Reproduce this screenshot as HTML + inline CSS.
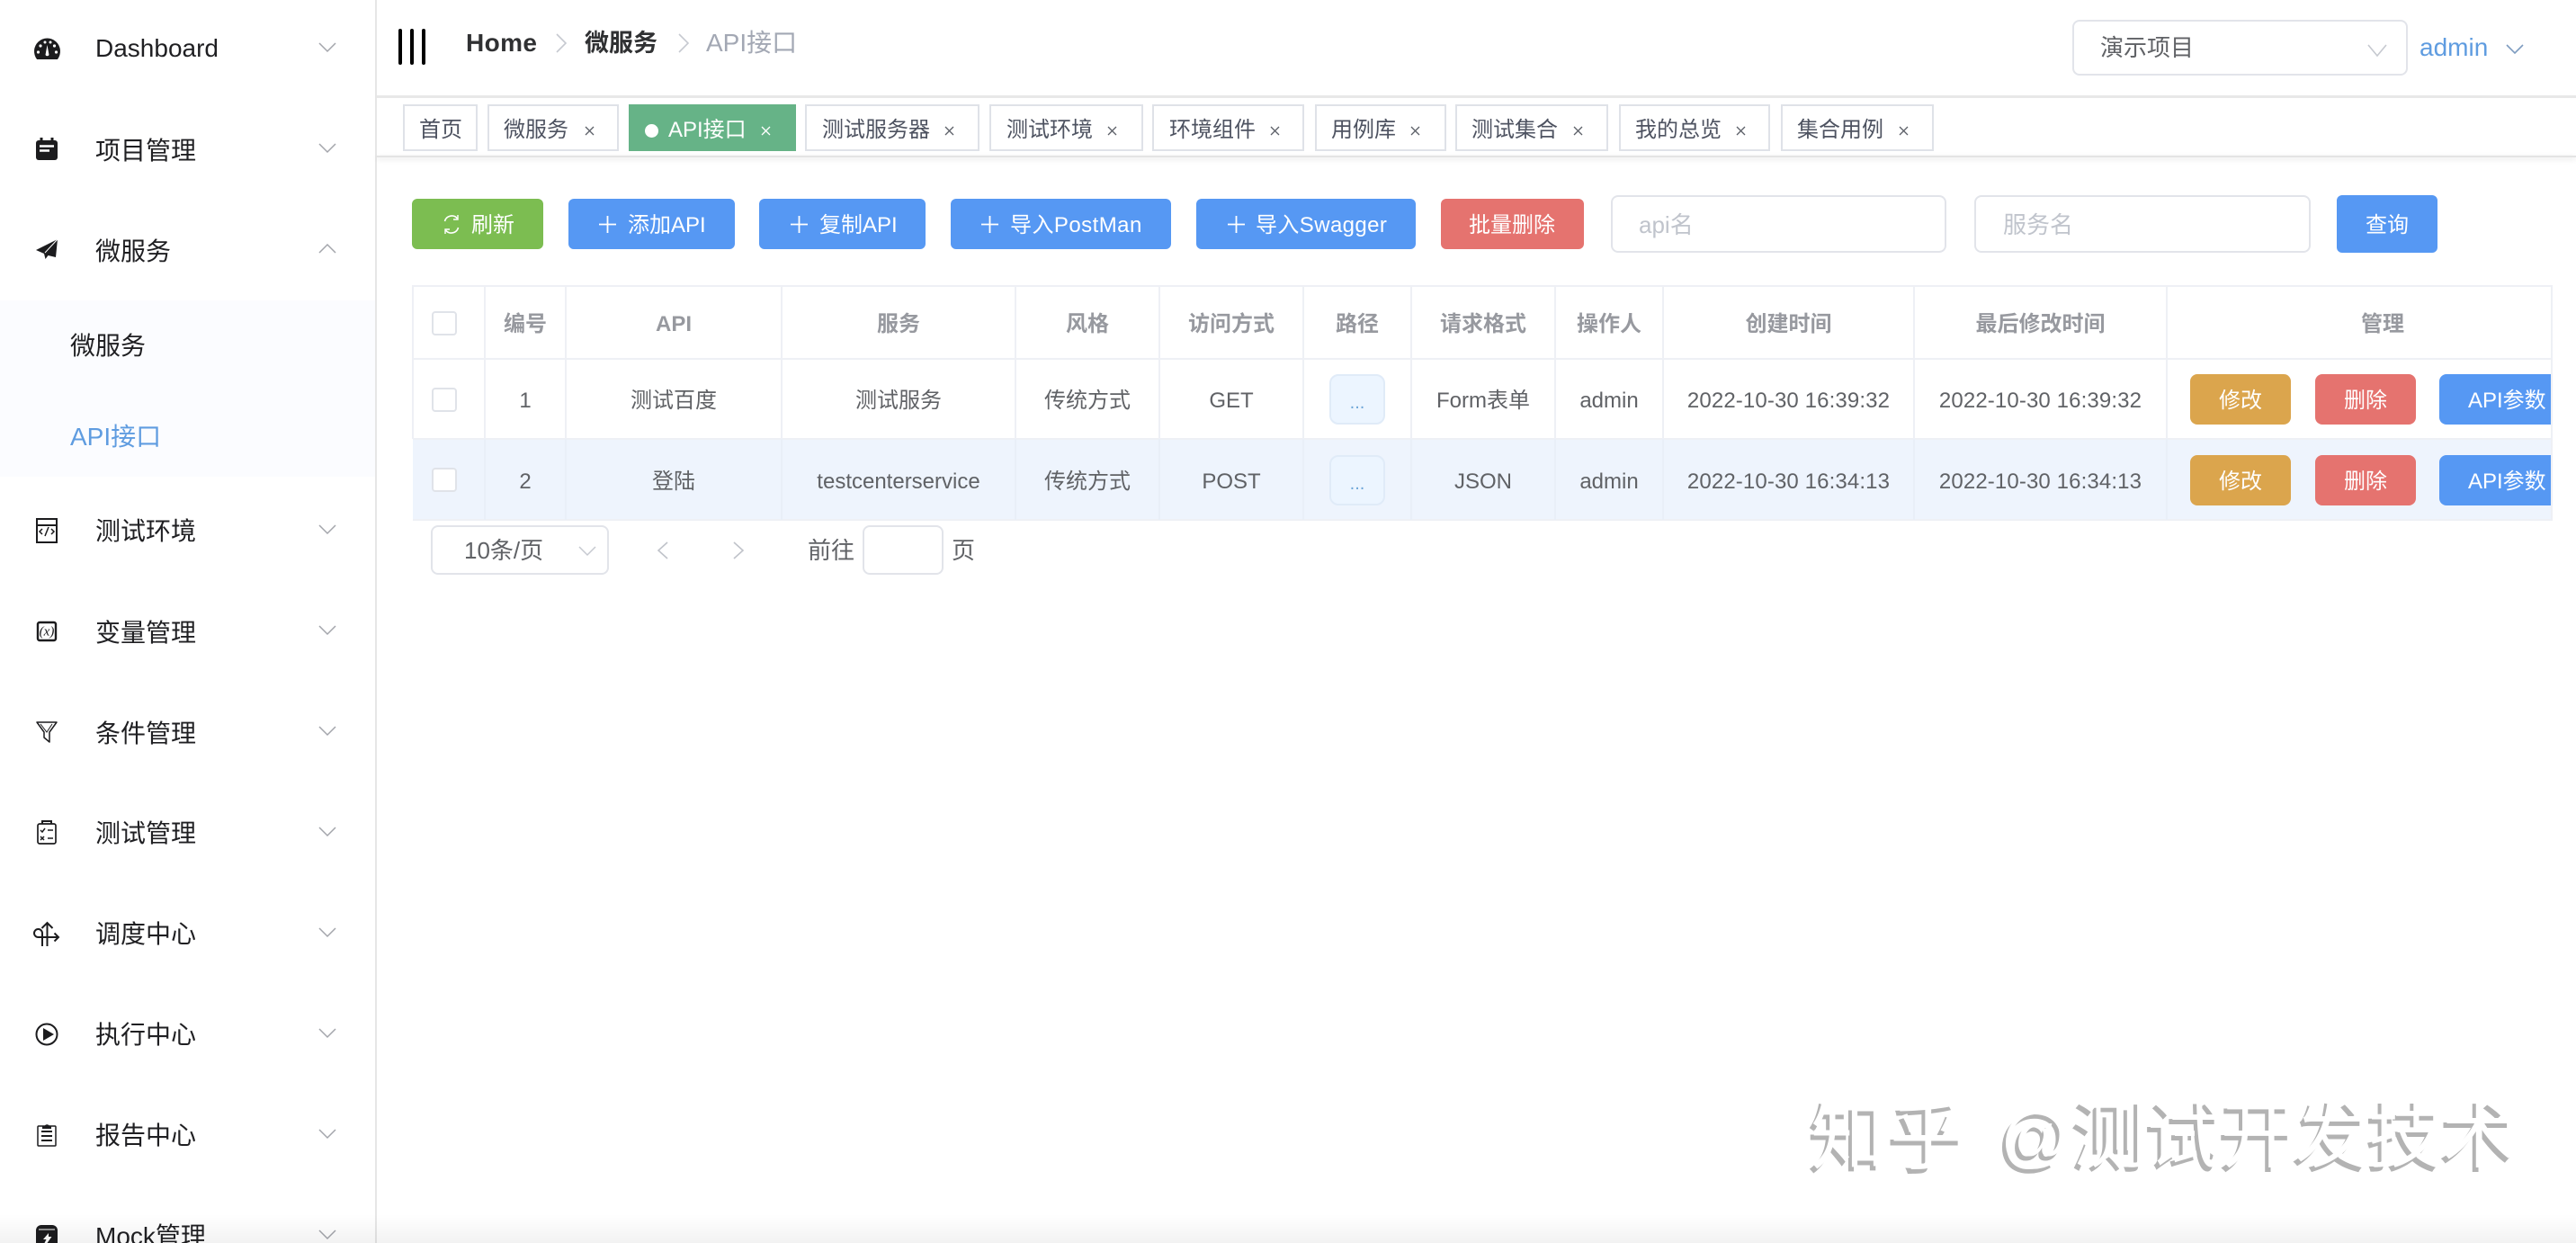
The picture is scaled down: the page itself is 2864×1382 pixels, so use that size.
<!DOCTYPE html>
<html lang="zh">
<head>
<meta charset="utf-8">
<title>API接口</title>
<style>
html,body{margin:0;padding:0;background:#fff}
#p{position:relative;width:2864px;height:1382px;overflow:hidden;background:#fff;font-family:"Liberation Sans","Noto Sans CJK SC",sans-serif}
#p div{position:absolute;box-sizing:border-box}
.t{white-space:nowrap;height:40px;line-height:40px}
.m{left:106px;font-size:28px;color:#1f1f22}
.tg{top:116px;height:52px;border:2px solid #dfe2e8;background:#fff}
.tt{top:125px;font-size:24px;color:#4e5361}
.b{height:56px;border-radius:6px;top:221px}
.bt{top:231px;font-size:24px;color:#fff}
.l{background:#eef0f5}
.c{text-align:center;font-size:24px;color:#606266}
.h{top:341px;color:#97999f;font-weight:bold}
.r1{top:426px}
.r2{top:516px}
.ck{width:28px;height:27px;left:480px;border:2px solid #e0e3e9;border-radius:4px;background:#fff}
.inp{border:2px solid #e2e4ea;border-radius:8px;background:#fff}
.act{width:112px;height:56px;border-radius:8px}
.pb{left:1478px;width:62px;height:56px;background:#ecf5ff;border:2px solid #e0ebf8;border-radius:10px}
.wm{color:#fff;text-shadow:-4px 5px 0 #b3b3b3;font-size:82px;height:100px;line-height:100px;white-space:nowrap;top:1214px}
</style>
</head>
<body>
<div id="p">
  <div style="left:0;top:334px;width:417px;height:196px;background:#fbfcff"></div>
  <div style="left:417px;top:0;width:2px;height:1382px;background:#e6e6e6"></div>

  <div class="t m" style="top:34px">Dashboard</div>
  <div class="t m" style="top:148px">项目管理</div>
  <div class="t m" style="top:260px">微服务</div>
  <div class="t m" style="top:365px;left:78px">微服务</div>
  <div class="t m" style="top:466px;left:78px;color:#5f9ce0">API接口</div>
  <div class="t m" style="top:571px">测试环境</div>
  <div class="t m" style="top:684px">变量管理</div>
  <div class="t m" style="top:796px">条件管理</div>
  <div class="t m" style="top:907px">测试管理</div>
  <div class="t m" style="top:1019px">调度中心</div>
  <div class="t m" style="top:1131px">执行中心</div>
  <div class="t m" style="top:1243px">报告中心</div>
  <div class="t m" style="top:1355px">Mock管理</div>

  <!-- top bar -->
  <div class="t" style="left:518px;top:28px;font-size:28px;font-weight:bold;color:#303133;letter-spacing:.4px">Home</div>
  <div class="t" style="left:650px;top:28px;font-size:27px;font-weight:bold;color:#303133">微服务</div>
  <div class="t" style="left:785px;top:28px;font-size:28px;color:#a3a8b4">API接口</div>
  <div class="inp" style="left:2304px;top:22px;width:373px;height:62px"></div>
  <div class="t" style="left:2335px;top:33px;font-size:26px;color:#606266">演示项目</div>
  <div class="t" style="left:2690px;top:33px;font-size:28px;color:#5f9ce0">admin</div>

  <!-- tag bar -->
  <div style="left:419px;top:106px;width:2445px;height:3px;background:#e8e8e8"></div>
  <div style="left:419px;top:173px;width:2445px;height:2px;background:#e4e4e4;box-shadow:0 2px 6px rgba(0,0,0,.14)"></div>
  <div class="tg" style="left:448px;width:83px"></div>
  <div class="tg" style="left:542px;width:146px"></div>
  <div class="tg" style="left:699px;width:186px;background:#66b387;border-color:#66b387"></div>
  <div class="tg" style="left:895px;width:194px"></div>
  <div class="tg" style="left:1100px;width:171px"></div>
  <div class="tg" style="left:1281px;width:169px"></div>
  <div class="tg" style="left:1462px;width:146px"></div>
  <div class="tg" style="left:1618px;width:170px"></div>
  <div class="tg" style="left:1800px;width:168px"></div>
  <div class="tg" style="left:1980px;width:170px"></div>
  <div class="t tt" style="left:466px">首页</div>
  <div class="t tt" style="left:560px">微服务</div>
  <div style="left:717px;top:138px;width:15px;height:15px;border-radius:50%;background:#fff"></div>
  <div class="t tt" style="left:743px;color:#fff">API接口</div>
  <div class="t tt" style="left:914px">测试服务器</div>
  <div class="t tt" style="left:1119px">测试环境</div>
  <div class="t tt" style="left:1300px">环境组件</div>
  <div class="t tt" style="left:1480px">用例库</div>
  <div class="t tt" style="left:1636px">测试集合</div>
  <div class="t tt" style="left:1818px">我的总览</div>
  <div class="t tt" style="left:1998px">集合用例</div>

  <!-- toolbar -->
  <div class="b" style="left:458px;width:146px;background:#7cbd51"></div>
  <div class="b" style="left:632px;width:185px;background:#5698f3"></div>
  <div class="b" style="left:844px;width:185px;background:#5698f3"></div>
  <div class="b" style="left:1057px;width:245px;background:#5698f3"></div>
  <div class="b" style="left:1330px;width:244px;background:#5698f3"></div>
  <div class="b" style="left:1602px;width:159px;background:#e5736f"></div>
  <div class="t bt" style="left:524px">刷新</div>
  <div class="t bt" style="left:698px">添加API</div>
  <div class="t bt" style="left:911px">复制API</div>
  <div class="t bt" style="left:1123px;letter-spacing:.45px">导入PostMan</div>
  <div class="t bt" style="left:1396px;letter-spacing:.4px">导入Swagger</div>
  <div class="t bt" style="left:1633px">批量删除</div>
  <div class="inp" style="left:1791px;top:217px;width:373px;height:64px"></div>
  <div class="t" style="left:1822px;top:230px;font-size:26px;color:#c0c4cc">api名</div>
  <div class="inp" style="left:2195px;top:217px;width:374px;height:64px"></div>
  <div class="t" style="left:2227px;top:230px;font-size:26px;color:#c0c4cc">服务名</div>
  <div style="left:2598px;top:217px;width:112px;height:64px;border-radius:6px;background:#5698f3"></div>
  <div class="t bt" style="left:2630px">查询</div>

  <!-- table -->
  <div style="left:459px;top:488px;width:2378px;height:91px;background:#eef4fd"></div>
  <div class="l" style="left:459px;top:317px;width:2379px;height:2px"></div>
  <div class="l" style="left:459px;top:398px;width:2379px;height:2px"></div>
  <div class="l" style="left:459px;top:487px;width:2379px;height:2px"></div>
  <div class="l" style="left:459px;top:577px;width:2379px;height:2px"></div>
  <div class="l" style="left:458px;top:317px;width:2px;height:171px"></div>
  <div class="l" style="left:538px;top:317px;width:2px;height:171px"></div>
  <div class="l" style="left:628px;top:317px;width:2px;height:171px"></div>
  <div class="l" style="left:868px;top:317px;width:2px;height:171px"></div>
  <div class="l" style="left:1128px;top:317px;width:2px;height:171px"></div>
  <div class="l" style="left:1288px;top:317px;width:2px;height:171px"></div>
  <div class="l" style="left:1448px;top:317px;width:2px;height:171px"></div>
  <div class="l" style="left:1568px;top:317px;width:2px;height:171px"></div>
  <div class="l" style="left:1728px;top:317px;width:2px;height:171px"></div>
  <div class="l" style="left:1848px;top:317px;width:2px;height:171px"></div>
  <div class="l" style="left:2127px;top:317px;width:2px;height:171px"></div>
  <div class="l" style="left:2408px;top:317px;width:2px;height:171px"></div>
  <div class="l" style="left:2836px;top:317px;width:2px;height:262px"></div>
  <div style="left:538px;top:488px;width:2px;height:90px;background:#e9eff8"></div>
  <div style="left:628px;top:488px;width:2px;height:90px;background:#e9eff8"></div>
  <div style="left:868px;top:488px;width:2px;height:90px;background:#e9eff8"></div>
  <div style="left:1128px;top:488px;width:2px;height:90px;background:#e9eff8"></div>
  <div style="left:1288px;top:488px;width:2px;height:90px;background:#e9eff8"></div>
  <div style="left:1448px;top:488px;width:2px;height:90px;background:#e9eff8"></div>
  <div style="left:1568px;top:488px;width:2px;height:90px;background:#e9eff8"></div>
  <div style="left:1728px;top:488px;width:2px;height:90px;background:#e9eff8"></div>
  <div style="left:1848px;top:488px;width:2px;height:90px;background:#e9eff8"></div>
  <div style="left:2127px;top:488px;width:2px;height:90px;background:#e9eff8"></div>
  <div style="left:2408px;top:488px;width:2px;height:90px;background:#e9eff8"></div>

  <div class="ck" style="top:346px"></div>
  <div class="ck" style="top:431px"></div>
  <div class="ck" style="top:520px"></div>

  <div class="t c h" style="left:539px;width:90px">编号</div>
  <div class="t c h" style="left:629px;width:240px">API</div>
  <div class="t c h" style="left:869px;width:260px">服务</div>
  <div class="t c h" style="left:1129px;width:160px">风格</div>
  <div class="t c h" style="left:1289px;width:160px">访问方式</div>
  <div class="t c h" style="left:1449px;width:120px">路径</div>
  <div class="t c h" style="left:1569px;width:160px">请求格式</div>
  <div class="t c h" style="left:1729px;width:120px">操作人</div>
  <div class="t c h" style="left:1849px;width:279px">创建时间</div>
  <div class="t c h" style="left:2128px;width:281px">最后修改时间</div>
  <div class="t c h" style="left:2549px;width:200px">管理</div>

  <div class="t c r1" style="left:539px;width:90px">1</div>
  <div class="t c r1" style="left:629px;width:240px">测试百度</div>
  <div class="t c r1" style="left:869px;width:260px">测试服务</div>
  <div class="t c r1" style="left:1129px;width:160px">传统方式</div>
  <div class="t c r1" style="left:1289px;width:160px">GET</div>
  <div class="pb" style="top:416px"></div>
  <div class="t c r1" style="left:1449px;width:120px;color:#6ea6d8;font-size:20px;top:428px">...</div>
  <div class="t c r1" style="left:1569px;width:160px">Form表单</div>
  <div class="t c r1" style="left:1729px;width:120px">admin</div>
  <div class="t c r1" style="left:1849px;width:279px;letter-spacing:.12px">2022-10-30 16:39:32</div>
  <div class="t c r1" style="left:2128px;width:281px;letter-spacing:.12px">2022-10-30 16:39:32</div>

  <div class="t c r2" style="left:539px;width:90px">2</div>
  <div class="t c r2" style="left:629px;width:240px">登陆</div>
  <div class="t c r2" style="left:869px;width:260px">testcenterservice</div>
  <div class="t c r2" style="left:1129px;width:160px">传统方式</div>
  <div class="t c r2" style="left:1289px;width:160px">POST</div>
  <div class="pb" style="top:506px"></div>
  <div class="t c r2" style="left:1449px;width:120px;color:#6ea6d8;font-size:20px;top:518px">...</div>
  <div class="t c r2" style="left:1569px;width:160px">JSON</div>
  <div class="t c r2" style="left:1729px;width:120px">admin</div>
  <div class="t c r2" style="left:1849px;width:279px;letter-spacing:.12px">2022-10-30 16:34:13</div>
  <div class="t c r2" style="left:2128px;width:281px;letter-spacing:.12px">2022-10-30 16:34:13</div>

  <div class="act" style="left:2435px;top:416px;background:#dba54d"></div>
  <div class="act" style="left:2574px;top:416px;background:#e5736f"></div>
  <div class="act" style="left:2712px;top:416px;width:124px;border-radius:8px 0 0 8px;background:#5698f3"></div>
  <div class="act" style="left:2435px;top:506px;background:#dba54d"></div>
  <div class="act" style="left:2574px;top:506px;background:#e5736f"></div>
  <div class="act" style="left:2712px;top:506px;width:124px;border-radius:8px 0 0 8px;background:#5698f3"></div>
  <div class="t bt" style="left:2467px;top:426px">修改</div>
  <div class="t bt" style="left:2606px;top:426px">删除</div>
  <div class="t bt" style="left:2744px;top:426px">API参数</div>
  <div class="t bt" style="left:2467px;top:516px">修改</div>
  <div class="t bt" style="left:2606px;top:516px">删除</div>
  <div class="t bt" style="left:2744px;top:516px">API参数</div>

  <!-- pager -->
  <div class="inp" style="left:479px;top:584px;width:198px;height:55px"></div>
  <div class="t" style="left:516px;top:592px;font-size:26px;color:#606266">10条/页</div>
  <div class="t" style="left:898px;top:592px;font-size:26px;color:#606266">前往</div>
  <div class="inp" style="left:959px;top:584px;width:90px;height:55px"></div>
  <div class="t" style="left:1058px;top:592px;font-size:26px;color:#606266">页</div>

  <!-- watermark -->
  <div class="wm" style="left:2013px;font-size:84px;letter-spacing:4px">知乎</div>
  <div class="wm" style="left:2224px;font-size:76px">@</div>
  <div class="wm" style="left:2305px">测试开发技术</div>

  <!-- icons -->
  <svg width="2864" height="1382" viewBox="0 0 2864 1382" style="position:absolute;left:0;top:0" fill="none">
    <!-- sidebar chevrons -->
    <g stroke="#a3a5ab" stroke-width="1.5">
      <path d="M355 48l9 9 9-9M355 160l9 9 9-9M355 281l9-9 9 9M355 584l9 9 9-9M355 696l9 9 9-9M355 808l9 9 9-9M355 920l9 9 9-9M355 1032l9 9 9-9M355 1144l9 9 9-9M355 1256l9 9 9-9M355 1368l9 9 9-9"/>
    </g>
    <!-- dashboard -->
    <path d="M41.100 66A14.500 14.500 0 1 1 63.900 66Z" fill="#1c1c1e"/>
    <g fill="#fff"><circle cx="42.500" cy="58" r="1.600"/><circle cx="45" cy="51" r="1.600"/><circle cx="50" cy="47" r="1.500"/><circle cx="56" cy="47" r="1.500"/><circle cx="60.500" cy="51" r="1.600"/><circle cx="62.500" cy="58" r="1.600"/><path d="M52.500 50l2 11a2.200 2.200 0 0 1-4 0Z"/></g>
    <!-- calendar -->
    <rect x="40" y="156" width="24" height="22" rx="3" fill="#1c1c1e"/>
    <path d="M46 153v5M58 153v5" stroke="#1c1c1e" stroke-width="3"/>
    <path d="M44 162.500h16M44 167.500h11" stroke="#fff" stroke-width="2.500"/>
    <!-- plane -->
    <path d="M64 266L40 278l9 4 1.500 6 3-4 8.500 2Z" fill="#1c1c1e"/>
    <path d="M64 266L50 281" stroke="#fff" stroke-width="1"/>
    <!-- code window -->
    <g stroke="#1c1c1e" stroke-width="2">
      <rect x="41" y="577" width="22" height="26"/><path d="M41 584h22"/>
      <path d="M47 588l-3 3 3 3M57 588l3 3-3 3" stroke-width="1.500"/><path d="M50 596l4-10" stroke-width="1.500"/>
    </g>
    <!-- variable -->
    <rect x="42" y="692" width="20" height="20" rx="2" stroke="#1c1c1e" stroke-width="2.400"/>
    <text x="52" y="706.500" text-anchor="middle" font-family="Liberation Serif,serif" font-style="italic" font-size="15" fill="#1c1c1e">(x)</text>
    <!-- filter -->
    <path d="M41 803H63L55 814V825L49 820V814Z" stroke="#1c1c1e" stroke-width="1.500" stroke-linejoin="round"/>
    <path d="M45 805l7 9 6-9" stroke="#1c1c1e" stroke-width="1"/>
    <!-- checklist -->
    <g stroke="#1c1c1e">
      <rect x="42" y="916" width="20" height="22" rx="2" stroke-width="1.700"/>
      <path d="M47 916v-3h10v3" stroke-width="2"/>
      <path d="M45 923l2 2 3-4M45 930l4 4M49 930l-4 4M53 923h6M53 932h6" stroke-width="1.500"/>
    </g>
    <!-- fork -->
    <g stroke="#1c1c1e" stroke-width="2">
      <path d="M52.500 1052V1026M46.500 1032l6-6 6 6"/>
      <path d="M47 1052V1037.500a4.500 4.500 0 1 0-4.500 4.500H65M60.500 1037.500l4.500 4.500-4.500 4.500"/>
    </g>
    <!-- play -->
    <circle cx="52" cy="1150" r="11.500" stroke="#1c1c1e" stroke-width="2"/>
    <path d="M48 1143l12 7-12 7Z" fill="#1c1c1e"/>
    <!-- clipboard -->
    <rect x="42" y="1252" width="20" height="22" rx="1" stroke="#1c1c1e" stroke-width="1.500"/>
    <path d="M47 1255v-3h2.500a3 3 0 0 1 5.500 0H57v3Z" fill="#1c1c1e"/>
    <path d="M46 1258h12M46 1263h12M46 1268h12" stroke="#1c1c1e" stroke-width="2"/>
    <!-- battery -->
    <path d="M40 1382v-14a6 6 0 0 1 6-6h12a6 6 0 0 1 6 6v14Z" fill="#1c1c1e"/>
    <path d="M43 1367h18" stroke="#fff" stroke-width="1"/>
    <path d="M54 1371l-6 7h3.500l-2 4h3l5-7h-3.500Z" fill="#fff"/>

    <!-- hamburger -->
    <g stroke="#000" stroke-width="4" stroke-linecap="round">
      <path d="M445 34v36M458 34v36M471 34v36"/>
    </g>
    <!-- breadcrumb separators -->
    <path d="M619 38l10 10-10 10M755 38l10 10-10 10" stroke="#c6c9d0" stroke-width="1.600"/>
    <!-- top dropdowns -->
    <path d="M2633 50l10 12 10-12" stroke="#c6c9d0" stroke-width="1.600"/>
    <path d="M2787 50l9 9 9-9" stroke="#7e9cc0" stroke-width="1.600"/>
    <!-- tag close -->
    <g stroke="#5c6068" stroke-width="1.300">
      <path d="M651 141l9 9m0-9l-9 9"/>
      <path d="M1051 141l9 9m0-9l-9 9"/>
      <path d="M1232 141l9 9m0-9l-9 9"/>
      <path d="M1413 141l9 9m0-9l-9 9"/>
      <path d="M1569 141l9 9m0-9l-9 9"/>
      <path d="M1750 141l9 9m0-9l-9 9"/>
      <path d="M1931 141l9 9m0-9l-9 9"/>
      <path d="M2112 141l9 9m0-9l-9 9"/>
      <path d="M847 141l9 9m0-9l-9 9" stroke="#fff"/>
    </g>
    <!-- toolbar icons -->
    <g stroke="#fff" stroke-width="1.800">
      <path d="M666 249.500h19M675.500 240v19M879 249.500h19M888.500 240v19M1091 249.500h19M1100.500 240v19M1365 249.500h19M1374.500 240v19"/>
      <path d="M494.500 246a8 8 0 0 1 14-3M509.500 253a8 8 0 0 1-14 3" stroke-width="1.600"/>
      <path d="M509 239v5h-5M495 260v-5h5" stroke-width="1.400"/>
    </g>
    <!-- pager chevrons -->
    <path d="M644 608l9 9 9-9" stroke="#c6c9d0" stroke-width="1.500"/>
    <path d="M742 603l-10 9 10 9" stroke="#c0c3ca" stroke-width="1.600"/>
    <path d="M816 603l10 9-10 9" stroke="#c0c3ca" stroke-width="1.600"/>
  </svg>

  <div style="left:0;top:1350px;width:2864px;height:32px;background:linear-gradient(rgba(0,0,0,0),rgba(0,0,0,.05))"></div>
</div>
</body>
</html>
